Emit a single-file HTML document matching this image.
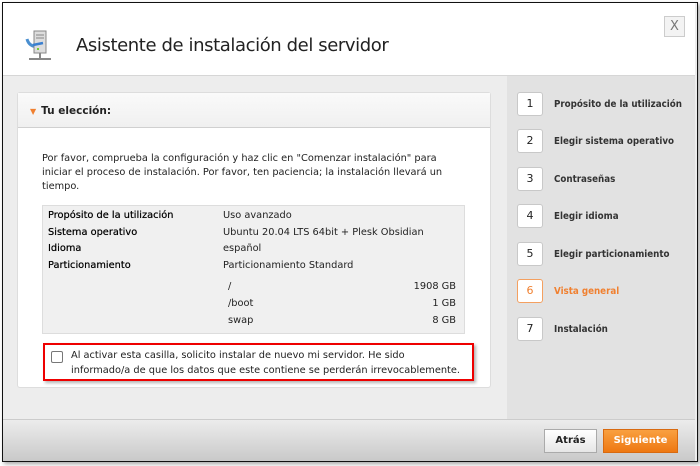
<!DOCTYPE html>
<html><head><meta charset="utf-8"><style>
*{margin:0;padding:0;box-sizing:border-box}
body{width:700px;height:466px;background:#fff;font-family:"DejaVu Sans","Liberation Sans",sans-serif;font-size:10.5px;color:#222;position:relative;overflow:hidden}
.frame{position:absolute;left:2px;top:2px;width:696px;height:460px;border:1.5px solid #111;box-shadow:2px 2px 4px rgba(0,0,0,.35);background:#ededed;overflow:hidden}
.hdr{position:absolute;left:0;top:0;width:692px;height:73px;background:#fff;border-bottom:1px solid #d6d6d6}
.title{position:absolute;left:73px;top:32px;font-size:18px;color:#222;font-family:"DejaVu Sans",sans-serif;letter-spacing:-.4px}
.x{position:absolute;left:661px;top:13px;width:21px;height:21px;border:1px solid #ccc;background:#f3f3f3;color:#777;font-size:13px;text-align:center;line-height:19px}
.side{position:absolute;left:504px;top:73px;width:188px;height:343px;background:#e2e2e2}
.step{position:absolute;left:10px;width:26px;height:24px;border:1px solid #c8c8c8;border-radius:3px;background:#fff;text-align:center;line-height:22px;font-size:11px}
.sl{position:absolute;left:47px;font-weight:bold;font-size:9.7px;color:#333;font-family:"DejaVu Sans Condensed","DejaVu Sans",sans-serif;font-stretch:condensed}
.on{border-color:#f4a060;color:#f08030}
.panel{position:absolute;left:14px;top:89px;width:474px;height:296px;background:#fff;border:1px solid #ddd;border-radius:3px}
.ph{height:35px;background:linear-gradient(#fafafa,#f0f0f0);border-bottom:1px solid #d0d0d0;padding:12px 0 0 12px;font-weight:bold;font-size:10.5px}
.ph span{color:#f08030;font-size:8px;margin-right:5px}
.p{position:absolute;left:24px;top:59px;width:420px;line-height:14px;font-size:9.8px}
.tbl{position:absolute;left:24px;top:112px;width:423px;height:129px;background:#f0f0f0;border:1px solid #ddd;font-size:9.8px}
.r{position:absolute;left:5px;color:#000;text-shadow:0 0 .4px #000}
.v{position:absolute;left:180px}
.g{position:absolute;right:8px}
.red{position:absolute;left:25px;top:250px;width:431px;height:38px;border:2px solid #e00;box-shadow:2px 2px 3px rgba(0,0,0,.3);background:#fff;font-size:9.8px;line-height:15px;padding:3px 0 0 26px;white-space:nowrap}
.cb{position:absolute;left:6px;top:6px;width:12px;height:12px;border:1.5px solid #777;border-radius:2px}
.foot{position:absolute;left:0;top:416px;width:692px;height:42px;background:linear-gradient(#ececec,#c9c9c9);border-top:1px solid #ccc}
.b1{position:absolute;left:541px;top:9px;width:53px;height:24px;border:1px solid #aaa;background:linear-gradient(#fff,#e6e6e6);font-weight:bold;text-align:center;line-height:22px;font-size:10px}
.b2{position:absolute;left:600px;top:9px;width:75px;height:24px;border:1px solid #d86a10;background:linear-gradient(#f9a040,#ee7812);color:#fff;font-weight:bold;text-align:center;line-height:22px;font-size:10px}
</style></head><body>
<div class="frame">
<div class="hdr">
<svg style="position:absolute;left:22px;top:26px" width="30" height="36" viewBox="0 0 30 36"><path d="M2 10 Q4 18 14 18" stroke="#4a8fd0" stroke-width="3" fill="none"/><rect x="9" y="2" width="12" height="22" fill="#ddd" stroke="#888"/><line x1="11" y1="6" x2="19" y2="6" stroke="#888"/><line x1="11" y1="9" x2="19" y2="9" stroke="#888"/><path d="M8 16 L18 14" stroke="#3a7fd0" stroke-width="2.5"/><rect x="12" y="19" width="2" height="2" fill="#7c3"/><line x1="15" y1="24" x2="15" y2="30" stroke="#888" stroke-width="2"/><line x1="4" y1="30" x2="26" y2="30" stroke="#888" stroke-width="2"/></svg>
<div class="title">Asistente de instalación del servidor</div>
<div class="x">X</div>
</div>
<div class="panel">
<div class="ph"><span>▼</span>Tu elección:</div>
<div class="p">Por favor, comprueba la configuración y haz clic en "Comenzar instalación" para iniciar el proceso de instalación. Por favor, ten paciencia; la instalación llevará un tiempo.</div>
<div class="tbl">
<div class="r" style="top:4px">Propósito de la utilización</div><div class="v" style="top:4px">Uso avanzado</div>
<div class="r" style="top:21px">Sistema operativo</div><div class="v" style="top:21px">Ubuntu 20.04 LTS 64bit + Plesk Obsidian</div>
<div class="r" style="top:37px">Idioma</div><div class="v" style="top:37px">español</div>
<div class="r" style="top:54px">Particionamiento</div><div class="v" style="top:54px">Particionamiento Standard</div>
<div class="v" style="top:75px;left:185px">/</div><div class="g" style="top:75px">1908 GB</div>
<div class="v" style="top:92px;left:185px">/boot</div><div class="g" style="top:92px">1 GB</div>
<div class="v" style="top:109px;left:185px">swap</div><div class="g" style="top:109px">8 GB</div>
</div>
<div class="red"><div class="cb"></div>Al activar esta casilla, solicito instalar de nuevo mi servidor. He sido<br>informado/a de que los datos que este contiene se perderán irrevocablemente.</div>
</div>
<div class="side">
<div class="step" style="top:16px">1</div><div class="sl" style="top:23px">Propósito de la utilización</div>
<div class="step" style="top:53px">2</div><div class="sl" style="top:60px">Elegir sistema operativo</div>
<div class="step" style="top:91px">3</div><div class="sl" style="top:98px">Contraseñas</div>
<div class="step" style="top:128px">4</div><div class="sl" style="top:135px">Elegir idioma</div>
<div class="step" style="top:166px">5</div><div class="sl" style="top:173px">Elegir particionamiento</div>
<div class="step on" style="top:203px">6</div><div class="sl" style="top:210px;color:#f08030">Vista general</div>
<div class="step" style="top:241px">7</div><div class="sl" style="top:248px">Instalación</div>
</div>
<div class="foot"><div class="b1">Atrás</div><div class="b2">Siguiente</div></div>
</div>
</body></html>
